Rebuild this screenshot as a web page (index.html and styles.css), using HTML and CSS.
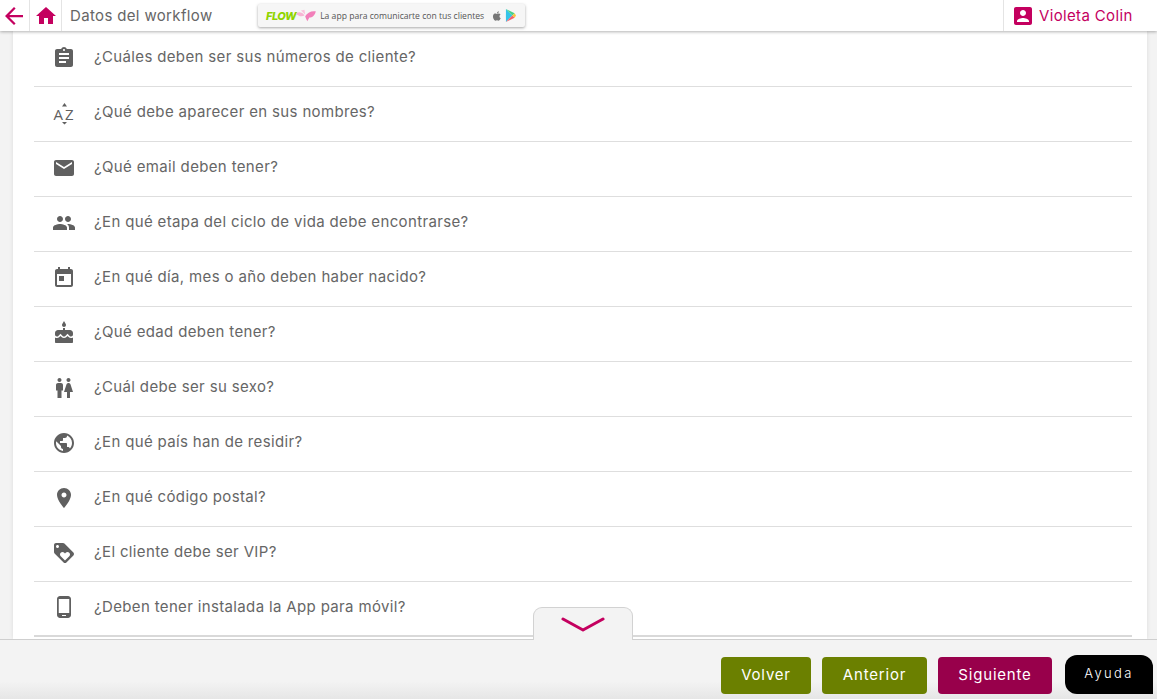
FILE: index.html
```html
<!DOCTYPE html>
<html lang="es">
  <head>
    <meta charset="UTF-8" />
    <meta name="viewport" content="width=device-width, initial-scale=1.0" />
    <title>Datos del workflow</title>
    <link rel="stylesheet" href="styles.css">
  </head>
  <body>
    <header class="topbar">
      <a class="topbar-btn back-btn" href="#">
        <svg class="icon-back" viewBox="4 4 16 16"><path d="M20 11H7.83l5.59-5.59L12 4l-8 8 8 8 1.41-1.41L7.83 13H20v-2z"/></svg>
      </a>
      <a class="topbar-btn home-btn" href="#">
        <svg class="icon-home" viewBox="0 0 24 24"><path d="M10 20v-6h4v6h5v-8h3L12 3 2 12h3v8z"/></svg>
      </a>
      <span class="page-title">Datos del workflow</span>
      <div class="banner">
        <span class="banner-logo">FLOW</span>
        <svg class="banner-wings" viewBox="0 0 34 16">
          <path fill="#f7b4d4" d="M0 5c4-3 9-2 12 3-4 2-9 1-12-3z"/>
          <path fill="#fbc4de" d="M7 1l6 6-1-7z"/>
          <path fill="#f27fba" d="M13 9c3-5 8-8 15-7-1 6-5 9-9 9l-3 5c-1-2-2-4-3-7z"/>
        </svg>
        <span class="banner-text">La app para comunicarte con tus clientes</span>
        <svg class="banner-apple" viewBox="0 0 24 24"><path fill="#777" d="M17 12.6c0-2.4 2-3.5 2-3.6-1.1-1.6-2.800-1.800-3.400-1.900-1.400-.1-2.800.9-3.500.9s-1.900-.9-3.100-.8C7 7.200 5.500 8.100 4.700 9.500c-1.700 2.900-.4 7.200 1.200 9.600.8 1.200 1.800 2.500 3 2.400 1.200 0 1.700-.8 3.100-.8s1.900.8 3.100.8c1.300 0 2.100-1.200 2.900-2.300.9-1.300 1.300-2.600 1.300-2.700-.1 0-2.300-.9-2.300-3.900zM14.700 5.500c.7-.8 1.100-1.900 1-3-.9 0-2.100.6-2.800 1.400-.6.700-1.100 1.800-1 2.900 1.100.1 2.100-.5 2.800-1.300z"/></svg>
        <svg class="banner-play" viewBox="0 0 12 14">
          <path fill="#35c4e8" d="M1 0v14l7-7z"/>
          <path fill="#48d08a" d="M1 0l7 7 2.500-2.500z"/>
          <path fill="#f4606c" d="M1 14l7-7 2.500 2.500z"/>
          <path fill="#f8c63d" d="M8 7l2.500-2.500L12 7l-1.500 2.500z"/>
        </svg>
      </div>
      <a class="user-btn" href="#">
        <svg class="icon-user" viewBox="3 3 18 18"><path d="M3 5v14c0 1.100.89 2 2 2h14c1.100 0 2-.9 2-2V5c0-1.100-.9-2-2-2H5c-1.110 0-2 .9-2 2zm12 4c0 1.660-1.340 3-3 3s-3-1.340-3-3 1.340-3 3-3 3 1.340 3 3zm-9 8c0-2 4-3.100 6-3.100s6 1.100 6 3.100v1H6v-1z"/></svg>
        Violeta Colin
      </a>
    </header>

    <main class="content">
      <ul class="question-list">
        <li class="question">
          <svg class="q-icon" viewBox="0 0 24 24"><path d="M19 3h-4.180C14.400 1.840 13.300 1 12 1c-1.300 0-2.400.84-2.820 2H5c-1.100 0-2 .9-2 2v14c0 1.100.9 2 2 2h14c1.100 0 2-.9 2-2V5c0-1.100-.9-2-2-2zm-7 0c.55 0 1 .45 1 1s-.45 1-1 1-1-.45-1-1 .45-1 1-1zm2 14H7v-2h7v2zm3-4H7v-2h10v2zm0-4H7V7h10v2z"/></svg>
          <span class="q-text">¿Cuáles deben ser sus números de cliente?</span>
        </li>
        <li class="question">
          <svg class="q-icon" viewBox="0 0 24 24">
            <text class="az-letter" x="1.500" y="19">A</text>
            <text class="az-letter" x="13" y="19">Z</text>
            <path d="M12.500 2L15 5.500h-5zM12.500 23.500L10 21h5z"/>
          </svg>
          <span class="q-text">¿Qué debe aparecer en sus nombres?</span>
        </li>
        <li class="question">
          <svg class="q-icon" viewBox="0 0 24 24"><path d="M20 4H4c-1.100 0-1.990.9-1.990 2L2 18c0 1.100.9 2 2 2h16c1.100 0 2-.9 2-2V6c0-1.100-.9-2-2-2zm0 4l-8 5-8-5V6l8 5 8-5v2z"/></svg>
          <span class="q-text">¿Qué email deben tener?</span>
        </li>
        <li class="question">
          <svg class="q-icon" viewBox="0 0 24 24"><path d="M16 11c1.660 0 2.990-1.340 2.990-3S17.660 5 16 5c-1.660 0-3 1.340-3 3s1.340 3 3 3zm-8 0c1.660 0 2.990-1.340 2.990-3S9.660 5 8 5C6.340 5 5 6.340 5 8s1.340 3 3 3zm0 2c-2.330 0-7 1.170-7 3.500V19h14v-2.500c0-2.330-4.670-3.500-7-3.500zm8 0c-.29 0-.62.02-.97.05 1.160.84 1.970 1.970 1.970 3.450V19h6v-2.500c0-2.330-4.670-3.500-7-3.500z"/></svg>
          <span class="q-text">¿En qué etapa del ciclo de vida debe encontrarse?</span>
        </li>
        <li class="question">
          <svg class="q-icon" viewBox="0 0 24 24"><path d="M19 3h-1V1h-2v2H8V1H6v2H5c-1.110 0-1.990.9-1.990 2L3 19c0 1.100.89 2 2 2h14c1.100 0 2-.9 2-2V5c0-1.100-.9-2-2-2zm0 16H5V8h14v11zM7 10h5v5H7z"/></svg>
          <span class="q-text">¿En qué día, mes o año deben haber nacido?</span>
        </li>
        <li class="question">
          <svg class="q-icon" viewBox="0 0 24 24"><path d="M12 6c1.110 0 2-.9 2-2 0-.38-.1-.73-.29-1.030L12 0l-1.710 2.970c-.19.3-.29.65-.29 1.030 0 1.100.9 2 2 2zm4.600 9.990l-1.070-1.070-1.080 1.070c-1.300 1.300-3.580 1.310-4.890 0l-1.070-1.070-1.090 1.070C6.750 16.640 5.880 17 4.960 17c-.73 0-1.400-.23-1.960-.61V21c0 .55.45 1 1 1h16c.55 0 1-.45 1-1v-4.610c-.56.38-1.230.61-1.960.61-.92 0-1.790-.36-2.440-1.010zM18 9h-5V7h-2v2H6c-1.660 0-3 1.340-3 3v1.540c0 1.080.88 1.960 1.960 1.960.52 0 1.020-.2 1.380-.57l2.140-2.130 2.130 2.130c.74.74 2.030.74 2.770 0l2.140-2.130 2.130 2.130c.37.37.86.57 1.380.57 1.080 0 1.960-.88 1.960-1.960V12C21 10.340 19.660 9 18 9z"/></svg>
          <span class="q-text">¿Qué edad deben tener?</span>
        </li>
        <li class="question">
          <svg class="q-icon" viewBox="0 0 24 24"><path d="M5.500 22v-7.500H4V9c0-1.100.9-2 2-2h3c1.100 0 2 .9 2 2v5.500H9.500V22h-4zM18 22v-6h3l-2.540-7.630C18.180 7.550 17.420 7 16.560 7h-.12c-.86 0-1.630.55-1.900 1.370L12 16h3v6h3zM7.500 6c1.110 0 2-.89 2-2s-.89-2-2-2-2 .89-2 2 .89 2 2 2zm9 0c1.110 0 2-.89 2-2s-.89-2-2-2-2 .89-2 2 .89 2 2 2z"/></svg>
          <span class="q-text">¿Cuál debe ser su sexo?</span>
        </li>
        <li class="question">
          <svg class="q-icon" viewBox="0 0 24 24"><path d="M12 2C6.480 2 2 6.480 2 12s4.480 10 10 10 10-4.480 10-10S17.520 2 12 2zm-1 17.930c-3.950-.49-7-3.850-7-7.930 0-.62.08-1.210.21-1.790L9 15v1c0 1.100.9 2 2 2v1.930zm6.900-2.540c-.26-.81-1-1.390-1.900-1.390h-1v-3c0-.55-.45-1-1-1H8v-2h2c.55 0 1-.45 1-1V7h2c1.100 0 2-.9 2-2v-.41c2.930 1.190 5 4.060 5 7.410 0 2.080-.8 3.970-2.100 5.390z"/></svg>
          <span class="q-text">¿En qué país han de residir?</span>
        </li>
        <li class="question">
          <svg class="q-icon" viewBox="0 0 24 24"><path d="M12 2C8.130 2 5 5.130 5 9c0 5.250 7 13 7 13s7-7.750 7-13c0-3.870-3.130-7-7-7zm0 9.500c-1.380 0-2.500-1.120-2.500-2.500s1.120-2.500 2.500-2.500 2.500 1.120 2.500 2.500-1.120 2.500-2.500 2.500z"/></svg>
          <span class="q-text">¿En qué código postal?</span>
        </li>
        <li class="question">
          <svg class="q-icon" viewBox="0 0 24 24"><path d="M21.410 11.580l-9-9C12.050 2.220 11.550 2 11 2H4c-1.100 0-2 .9-2 2v7c0 .55.22 1.050.59 1.420l9 9c.36.36.86.58 1.410.58.55 0 1.050-.22 1.410-.59l7-7c.37-.36.59-.86.59-1.410 0-.55-.23-1.060-.59-1.420zM5.500 7C4.670 7 4 6.330 4 5.500S4.670 4 5.500 4 7 4.670 7 5.500 6.330 7 5.500 7zm11.770 8.270L13 19.540l-4.270-4.270C8.280 14.810 8 14.190 8 13.500c0-1.380 1.120-2.500 2.500-2.500.69 0 1.320.28 1.770.74l.73.72.73-.73c.45-.45 1.080-.73 1.770-.73 1.380 0 2.500 1.120 2.500 2.500 0 .69-.28 1.320-.73 1.770z"/></svg>
          <span class="q-text">¿El cliente debe ser VIP?</span>
        </li>
        <li class="question">
          <svg class="q-icon" viewBox="0 0 24 24"><path d="M16 1H8C6.340 1 5 2.340 5 4v16c0 1.660 1.340 3 3 3h8c1.660 0 3-1.340 3-3V4c0-1.660-1.340-3-3-3zm-2 20h-4v-1h4v1zm3.250-3H6.750V4h10.500v14z"/></svg>
          <span class="q-text">¿Deben tener instalada la App para móvil?</span>
        </li>
      </ul>
    </main>

    <footer class="bottombar">
      <a class="more-tab" href="#">
        <svg class="icon-chevron" viewBox="0 0 44 16"><path d="M2 2l20 11L42 2"/></svg>
      </a>
      <button class="btn btn-green btn-volver">Volver</button>
      <button class="btn btn-green btn-anterior">Anterior</button>
      <button class="btn btn-wine btn-siguiente">Siguiente</button>
      <button class="btn-help">Ayuda</button>
    </footer>
  </body>
</html>
```

FILE: styles.css
```css
* {
  box-sizing: border-box;
}
html,
body {
  margin: 0;
  height: 100%;
  overflow: hidden;
}
body {
  display: flex;
  flex-direction: column;
  background-color: #f3f3f3;
  color: #666;
  font-family: Inter, "Noto Sans", sans-serif;
  font-size: 15px;
  letter-spacing: 0.35px;
}
a {
  color: inherit;
  text-decoration: none;
}

/* top bar */
.topbar {
  position: relative;
  z-index: 2;
  flex: 0 0 31px;
  display: flex;
  align-items: stretch;
  background-color: white;
  box-shadow: 0 1px 3px rgba(0, 0, 0, 0.3);
}
.topbar-btn {
  display: flex;
  align-items: center;
  justify-content: center;
  border-right: 1px solid #e4e4e4;
  fill: #c4005f;
}
.back-btn {
  width: 30px;
  padding-right: 2px;
}
.icon-back {
  width: 18px;
  height: 18px;
}
.home-btn {
  width: 32px;
}
.icon-home {
  width: 24px;
  height: 24px;
}
.page-title {
  align-self: center;
  margin-left: 8px;
  width: 188px;
  padding-bottom: 1px;
  color: #666;
}
.banner {
  display: flex;
  align-items: center;
  width: 267px;
  height: 23px;
  margin-top: 4px;
  padding-left: 8px;
  background-color: #f6f6f6;
  border-radius: 2px;
  box-shadow: 0 1px 3px rgba(0, 0, 0, 0.35);
  letter-spacing: 0;
}
.banner-logo {
  color: #8fd400;
  font-size: 11px;
  font-weight: 800;
  font-style: italic;
  letter-spacing: -0.5px;
}
.banner-wings {
  width: 24px;
  height: 13px;
}
.banner-text {
  width: 171px;
  color: #555;
  font-family: "Open Sans", sans-serif;
  font-size: 8.6px;
  white-space: nowrap;
}
.banner-apple {
  width: 12px;
  height: 14px;
}
.banner-play {
  width: 11px;
  height: 13px;
  margin-left: 2px;
}
.user-btn {
  display: flex;
  align-items: center;
  gap: 7px;
  margin-left: auto;
  width: 154px;
  padding-left: 10px;
  border-left: 1px solid #e4e4e4;
  color: #c4005f;
  fill: #c4005f;
}
.icon-user {
  width: 18px;
  height: 18px;
}

/* question list */
.content {
  flex: 1;
  margin: 0 10px 0 13px;
  padding: 1px 15px 0 21px;
  background-color: white;
  box-shadow: 0 0 4px rgba(0, 0, 0, 0.1);
  overflow: hidden;
}
.question-list {
  margin: 0;
  padding: 0;
  list-style: none;
}
.question {
  display: flex;
  align-items: center;
  height: 55px;
  padding-bottom: 3px;
  border-bottom: 1px solid #dedede;
}
.question:last-child {
  border-bottom: 2px solid #d9d9d9;
}
.q-icon {
  flex: none;
  width: 24px;
  height: 24px;
  margin: 0 18px 0 18px;
  fill: #606060;
}
.q-text {
  padding-bottom: 2px;
}
.az-letter {
  font-family: "Open Sans", sans-serif;
  font-size: 15px;
  letter-spacing: 0;
}

/* bottom bar */
.bottombar {
  position: relative;
  z-index: 2;
  flex: 0 0 60px;
  display: flex;
  align-items: flex-start;
  padding-top: 17px;
  background: linear-gradient(#f3f3f3 70%, #e6e6e6);
  border-top: 1px solid #cfcfcf;
}
.more-tab {
  position: absolute;
  left: 533px;
  top: -33px;
  display: flex;
  justify-content: center;
  width: 100px;
  height: 33px;
  padding-top: 9px;
  background-color: #f3f3f3;
  border: 1px solid #d2d2d2;
  border-bottom: none;
  border-radius: 9px 9px 0 0;
}
.icon-chevron {
  width: 44px;
  height: 16px;
  fill: none;
  stroke: #c4005f;
  stroke-width: 3;
  stroke-linecap: round;
  stroke-linejoin: round;
}
.btn,
.btn-help {
  height: 37px;
  border: none;
  color: white;
  font-family: Inter, "Noto Sans", sans-serif;
  font-size: 15px;
  letter-spacing: 0.8px;
  cursor: pointer;
}
.btn {
  padding: 0 0 2px;
  border-radius: 4px;
  margin-right: 11px;
}
.btn-green {
  background-color: #6b8000;
}
.btn-wine {
  background-color: #98004b;
}
.btn-volver {
  width: 90px;
  margin-left: 721px;
}
.btn-anterior {
  width: 105px;
}
.btn-siguiente {
  width: 114px;
  margin-right: 13px;
}
.btn-help {
  width: 88px;
  height: 39px;
  margin-top: -2px;
  padding-bottom: 5px;
  background-color: black;
  border-radius: 12px 12px 0 12px;
  color: white;
  font-size: 13px;
  font-weight: 300;
  letter-spacing: 2.4px;
}
```
